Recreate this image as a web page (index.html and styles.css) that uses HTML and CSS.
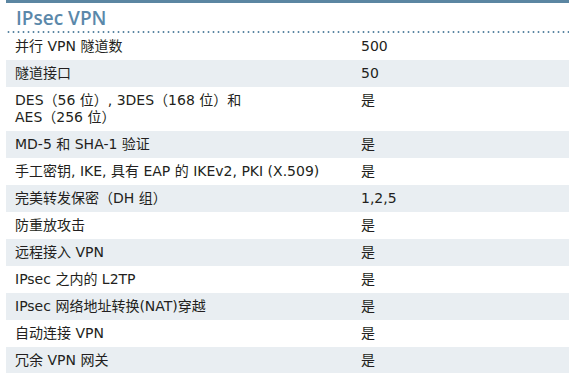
FILE: index.html
```html
<!DOCTYPE html>
<html lang="zh-CN">
<head>
<meta charset="utf-8">
<link rel="stylesheet" href="styles.css">
</head>
<body>
<div class="spec">
  <h2 class="title">IPsec VPN</h2>
  <div class="rows">
    <div class="row"><div class="k">并行 VPN 隧道数</div><div class="v">500</div></div>
    <div class="row alt"><div class="k">隧道接口</div><div class="v">50</div></div>
    <div class="row"><div class="k">DES（56 位）, 3DES（168 位）和<br>AES（256 位）</div><div class="v">是</div></div>
    <div class="row alt"><div class="k">MD-5 和 SHA-1 验证</div><div class="v">是</div></div>
    <div class="row"><div class="k">手工密钥, IKE, 具有 EAP 的 IKEv2, PKI (X.509)</div><div class="v">是</div></div>
    <div class="row alt"><div class="k">完美转发保密（DH 组）</div><div class="v">1,2,5</div></div>
    <div class="row"><div class="k">防重放攻击</div><div class="v">是</div></div>
    <div class="row alt"><div class="k">远程接入 VPN</div><div class="v">是</div></div>
    <div class="row"><div class="k">IPsec 之内的 L2TP</div><div class="v">是</div></div>
    <div class="row alt"><div class="k">IPsec 网络地址转换(NAT)穿越</div><div class="v">是</div></div>
    <div class="row"><div class="k">自动连接 VPN</div><div class="v">是</div></div>
    <div class="row alt"><div class="k">冗余 VPN 网关</div><div class="v">是</div></div>
  </div>
</div>
</body>
</html>
```

FILE: styles.css
```css
html, body {
  margin: 0;
  padding: 0;
  background: #ffffff;
}
body {
  font-family: "DejaVu Sans", "Noto Sans CJK SC", sans-serif;
  color: #231f20;
}
.spec {
  margin-left: 6px;
  width: 563px;
  border-top: 3px solid #5b86a2;
  border-bottom: 3px solid #55809c;
}
.title {
  margin: 0;
  padding: 3px 0 0 10px;
  height: 25px;
  font-family: "Open Sans", sans-serif;
  font-size: 19px;
  line-height: 24px;
  font-weight: 600;
  color: #5b88aa;
  background-image: radial-gradient(circle, #5b86a2 0.9px, transparent 1.2px);
  background-size: 5px 2px;
  background-repeat: repeat-x;
  background-position: 0 100%;
  padding-bottom: 2px;
}
.row {
  display: grid;
  grid-template-columns: 346px 1fr;
  font-size: 14px;
  line-height: 17px;
}
.row.alt {
  background: #e9eef2;
}
.k, .v {
  padding: 5px 0 5px 9px;
}
```
